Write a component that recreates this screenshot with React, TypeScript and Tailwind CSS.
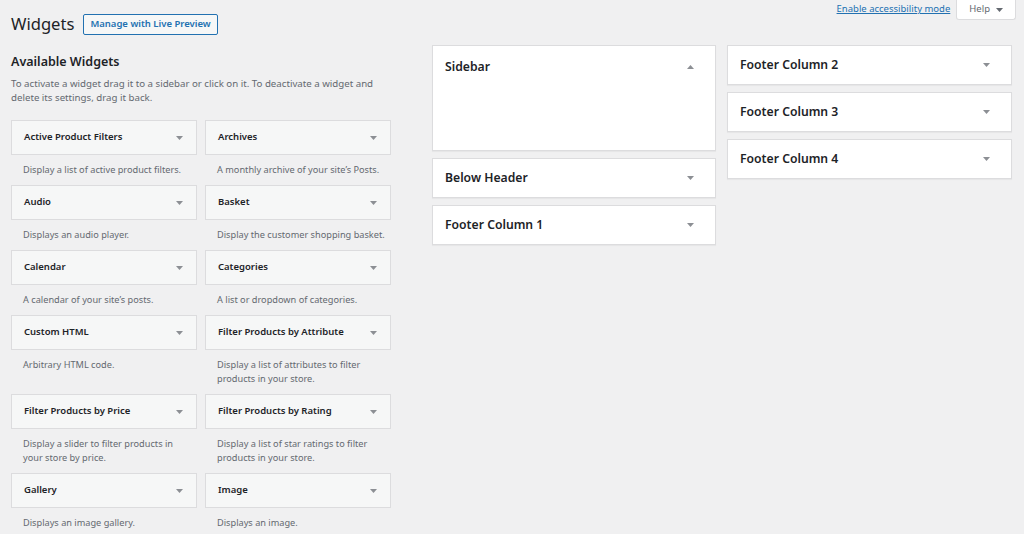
const widgets: { name: string; desc: string[] }[] = [
  { name: 'Active Product Filters', desc: ['Display a list of active product filters.'] },
  { name: 'Archives', desc: ["A monthly archive of your site\u2019s Posts."] },
  { name: 'Audio', desc: ['Displays an audio player.'] },
  { name: 'Basket', desc: ['Display the customer shopping basket.'] },
  { name: 'Calendar', desc: ["A calendar of your site\u2019s posts."] },
  { name: 'Categories', desc: ['A list or dropdown of categories.'] },
  { name: 'Custom HTML', desc: ['Arbitrary HTML code.'] },
  { name: 'Filter Products by Attribute', desc: ['Display a list of attributes to filter', 'products in your store.'] },
  { name: 'Filter Products by Price', desc: ['Display a slider to filter products in', 'your store by price.'] },
  { name: 'Filter Products by Rating', desc: ['Display a list of star ratings to filter', 'products in your store.'] },
  { name: 'Gallery', desc: ['Displays an image gallery.'] },
  { name: 'Image', desc: ['Displays an image.'] },
];

function Arrow({ up = false }: { up?: boolean }) {
  return (
    <svg width="7" height="4" viewBox="0 0 7 4" className="shrink-0">
      <path d={up ? 'M0 4 L3.5 0 L7 4 Z' : 'M0 0 L7 0 L3.5 4 Z'} fill="#8c8f94" />
    </svg>
  );
}

function SidebarBox({ title, tall = false }: { title: string; tall?: boolean }) {
  return (
    <div
      className={`bg-white border border-[#dcdcde] shadow-[0_1px_1px_rgba(0,0,0,0.04)] ${
        tall ? 'h-[106px]' : 'h-[40px]'
      }`}
    >
      <div className={`flex items-center justify-between pl-3 pr-[21px] ${tall ? 'h-[42px]' : 'h-full'}`}>
        <h3 className="text-[12.2px] font-semibold text-[#1d2327]">{title}</h3>
        <Arrow up={tall} />
      </div>
    </div>
  );
}

export default function App() {
  return (
    <div
      className="min-h-screen bg-[#f0f0f1] text-[#3c434a] overflow-hidden"
      style={{ fontFamily: '"Noto Sans", "Open Sans", sans-serif' }}
    >
      {/* header */}
      <div className="flex items-start justify-between pl-[11px] pr-2">
        <div className="flex items-center gap-[9px] pt-[12px]">
          <h1 className="text-[16.6px] leading-[24px] text-[#1d2327]">Widgets</h1>
          <button className="h-[21px] px-[6px] border border-[#2271b1] rounded-[2px] bg-[#f6f7f7] text-[#2271b1] text-[9.5px] font-semibold leading-none">
            Manage with Live Preview
          </button>
        </div>
        <div className="flex items-start gap-[6px]">
          <a className="mt-[2px] text-[9.5px] text-[#2271b1] underline">Enable accessibility mode</a>
          <div className="h-[20px] px-[12px] flex items-center gap-[6px] bg-white border-x border-b border-[#dcdcde] text-[9.5px] text-[#646970] rounded-b-[3px]">
            Help
            <svg width="7" height="4" viewBox="0 0 7 4">
              <path d="M0 0 L7 0 L3.5 4 Z" fill="#646970" />
            </svg>
          </div>
        </div>
      </div>

      <div className="flex items-start pl-[11px] mt-[9px]">
        {/* available widgets */}
        <div className="w-[380px] shrink-0">
          <h2 className="text-[12.5px] font-semibold text-[#1d2327] leading-[20px] mt-[7px]">Available Widgets</h2>
          <p className="mt-[5px] text-[9.7px] leading-[14px] text-[#646970]">
            To activate a widget drag it to a sidebar or click on it. To deactivate a widget and delete its settings, drag it back.
          </p>
          <div className="grid grid-cols-[186px_186px] gap-x-[8px] mt-[15px]">
            {widgets.map((w) => (
              <div key={w.name}>
                <div className="h-[35px] flex items-center justify-between pl-3 pr-[13px] bg-[#f6f7f7] border border-[#dcdcde]">
                  <span className="text-[9.5px] font-semibold text-[#1d2327]">{w.name}</span>
                  <Arrow />
                </div>
                <div className="pl-3 py-[8px] text-[9.2px] leading-[14px] text-[#646970]">
                  {w.desc.map((line) => (
                    <p key={line} className="whitespace-nowrap">{line}</p>
                  ))}
                </div>
              </div>
            ))}
          </div>
        </div>

        {/* sidebars */}
        <div className="ml-[41px] w-[284px] flex flex-col gap-[7px]">
          <SidebarBox title="Sidebar" tall />
          <SidebarBox title="Below Header" />
          <SidebarBox title="Footer Column 1" />
        </div>
        <div className="ml-[11px] w-[285px] flex flex-col gap-[7px]">
          <SidebarBox title="Footer Column 2" />
          <SidebarBox title="Footer Column 3" />
          <SidebarBox title="Footer Column 4" />
        </div>
      </div>
    </div>
  );
}
